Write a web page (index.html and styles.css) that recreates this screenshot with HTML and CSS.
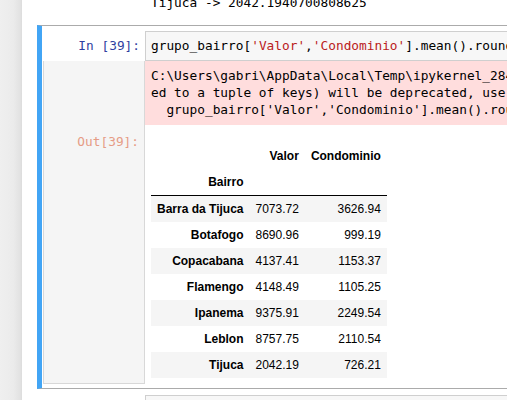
FILE: index.html
```html
<!DOCTYPE html>
<html>
<head>
<meta charset="utf-8">
<link rel="stylesheet" href="styles.css">
</head>
<body>
<div class="page">
  <div class="gutter"></div>
  <div class="notebook">
    <div class="prev-output">Tijuca -&gt; 2042.1940700808625</div>

    <div class="cell selected">
      <div class="input-row">
        <div class="prompt in-prompt">In&nbsp;[39]:</div>
        <div class="input-area"><span class="cm-var">grupo_bairro[</span><span class="cm-str">'Valor'</span><span class="cm-var">,</span><span class="cm-str">'Condominio'</span><span class="cm-var">].mean().round(2)</span></div>
      </div>
      <div class="output-row">
        <div class="out-prompt-col">
          <div class="out-prompt-box"><div class="out-prompt">Out[39]:</div></div>
        </div>
        <div class="outputs">
          <div class="stderr">
            <div class="line">C:\Users\gabri\AppData\Local\Temp\ipykernel_2844\1843255364.py:1: FutureWarning: Indexing with multiple keys (implicitly convert</div>
            <div class="line">ed to a tuple of keys) will be deprecated, use a list instead.</div>
            <div class="line">  grupo_bairro['Valor','Condominio'].mean().round(2)</div>
          </div>
          <div class="result">
            <table class="df">
              <thead>
                <tr><th></th><th>Valor</th><th>Condominio</th></tr>
                <tr><th>Bairro</th><th></th><th></th></tr>
              </thead>
              <tbody>
                <tr><th>Barra da Tijuca</th><td>7073.72</td><td>3626.94</td></tr>
                <tr><th>Botafogo</th><td>8690.96</td><td>999.19</td></tr>
                <tr><th>Copacabana</th><td>4137.41</td><td>1153.37</td></tr>
                <tr><th>Flamengo</th><td>4148.49</td><td>1105.25</td></tr>
                <tr><th>Ipanema</th><td>9375.91</td><td>2249.54</td></tr>
                <tr><th>Leblon</th><td>8757.75</td><td>2110.54</td></tr>
                <tr><th>Tijuca</th><td>2042.19</td><td>726.21</td></tr>
              </tbody>
            </table>
          </div>
        </div>
      </div>
    </div>

    <div class="next-cell"><div class="input-area next-input"></div></div>
  </div>
</div>
</body>
</html>
```

FILE: styles.css
```css
html, body {
  margin: 0;
  padding: 0;
  overflow: hidden;
  width: 507px;
  height: 400px;
  background: #eeeeee;
}
.page {
  display: flex;
  width: 1000px;
  height: 400px;
}
.gutter {
  width: 22px;
  flex: none;
  background: linear-gradient(to right, #efefef 0%, #ebebeb 60%, #e2e2e2 92%, #dcdcdc 100%);
}
.notebook {
  flex: 1;
  background: #ffffff;
  font-family: "DejaVu Sans Mono", "Liberation Mono", monospace;
  font-size: 12.8px;
}
.prev-output {
  margin-top: -6px;
  padding-left: 129px;
  line-height: 17px;
  height: 17px;
  color: #000;
  white-space: pre;
}
.cell {
  margin-top: 14px;
  margin-left: 15px;
  border-left: 5px solid #42a5f5;
  border-top: 1px solid #ababab;
  border-bottom: 1px solid #ababab;
  padding: 5px 0 4px 0;
}
.input-row {
  display: flex;
}
.prompt {
  width: 103px;
  flex: none;
  box-sizing: border-box;
  text-align: right;
  padding-right: 5px;
  line-height: 17px;
}
.in-prompt {
  color: #303f9f;
  padding-top: 6px;
}
.input-area {
  flex: 1;
  border: 1px solid #cfcfcf;
  background: #f7f7f7;
  padding: 5px 5px;
  line-height: 18px;
  height: 18px;
  white-space: pre;
  overflow: hidden;
}
.cm-var { color: #000000; }
.cm-str { color: #ba2121; }
.output-row {
  display: flex;
}
.out-prompt-col {
  width: 103px;
  flex: none;
  display: flex;
}
.out-prompt-box {
  flex: 1;
  margin-left: 1px;
  background: #f5f5f5;
  border: 1px solid #d8d8d8;
  border-top: none;
  padding-top: 72px;
  margin-bottom: 0;
}
.out-prompt {
  text-align: right;
  padding-right: 5px;
  line-height: 17px;
  color: #e69c85;
}
.outputs {
  flex: 1;
  display: flex;
  flex-direction: column;
}
.stderr {
  background: #ffdddd;
  padding: 6px 6px 7px 6px;
  line-height: 17px;
  color: #000;
}
.line {
  white-space: pre;
  overflow: hidden;
}
.result {
  padding: 18px 0 6px 6px;
}
.df {
  border-collapse: collapse;
  border-spacing: 0;
  font-family: "Liberation Sans", Arial, sans-serif;
  font-size: 12px;
  color: #000;
}
.df th, .df td {
  padding: 6px 6px;
  line-height: 14px;
  text-align: right;
  vertical-align: middle;
  white-space: nowrap;
}
.df th {
  font-weight: bold;
}
.df thead {
  border-bottom: 1px solid #000;
}
.df tbody tr:nth-child(odd) {
  background: #f5f5f5;
}
.next-cell {
  margin-top: 6px;
  padding-left: 123px;
  display: flex;
}
.next-input {
  height: 30px;
  background: #f7f7f7;
}
```
